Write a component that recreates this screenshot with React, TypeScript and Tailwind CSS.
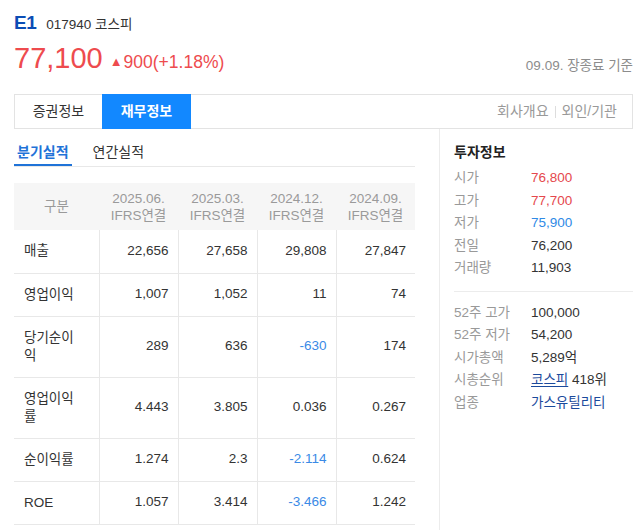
import React from "react";

const FONT = '"Liberation Sans", "Noto Sans CJK KR", sans-serif';

type Cell = { v: string; neg?: boolean };
type Row = { label: string; cells: Cell[]; tall?: boolean };

const rows: Row[] = [
  { label: "매출", cells: [{ v: "22,656" }, { v: "27,658" }, { v: "29,808" }, { v: "27,847" }] },
  { label: "영업이익", cells: [{ v: "1,007" }, { v: "1,052" }, { v: "11" }, { v: "74" }] },
  { label: "당기순이익", tall: true, cells: [{ v: "289" }, { v: "636" }, { v: "-630", neg: true }, { v: "174" }] },
  { label: "영업이익률", tall: true, cells: [{ v: "4.443" }, { v: "3.805" }, { v: "0.036" }, { v: "0.267" }] },
  { label: "순이익률", cells: [{ v: "1.274" }, { v: "2.3" }, { v: "-2.114", neg: true }, { v: "0.624" }] },
  { label: "ROE", cells: [{ v: "1.057" }, { v: "3.414" }, { v: "-3.466", neg: true }, { v: "1.242" }] },
];

const heads = ["2025.06.", "2025.03.", "2024.12.", "2024.09."];

function InfoRow({ label, children }: { label: string; children: React.ReactNode }) {
  return (
    <div className="flex h-[22.5px] items-center text-[13.5px]">
      <span className="w-[77px] text-[#999]">{label}</span>
      <span>{children}</span>
    </div>
  );
}

export default function App() {
  return (
    <div className="w-[642px] h-[530px] bg-white overflow-hidden text-[#333]" style={{ fontFamily: FONT }}>
      {/* header */}
      <div className="pl-[14px] pr-[9px] pt-[9px]">
        <div className="flex items-baseline h-[24px]">
          <span className="text-[19px] font-bold text-[#0b4db5] tracking-[-0.5px]">E1</span>
          <span className="ml-[10px] text-[13.5px] text-[#333]">017940 코스피</span>
        </div>
        <div className="flex items-end justify-between h-[44px]">
          <div className="flex items-baseline pb-[2px]">
            <span className="text-[29px] leading-[34px] text-[#ee4b4e]">77,100</span>
            <span className="ml-[7px] text-[17.5px] text-[#ee4b4e]">
              <span className="text-[13px] relative top-[-2px] mr-[1px]">▲</span>900(+1.18%)
            </span>
          </div>
          <span className="text-[13.5px] text-[#8c8c8c] pb-[1px]">09.09. 장종료 기준</span>
        </div>
      </div>

      {/* tab bar */}
      <div className="ml-[14px] mr-[9px] mt-[17px] h-[35px] border border-[#e3e3e3] flex items-stretch justify-between">
        <div className="flex">
          <div className="w-[87px] flex items-center justify-center text-[14px] text-[#333]">증권정보</div>
          <div className="w-[89px] -my-px flex items-center justify-center text-[14px] font-bold text-white bg-[#1288ff]">재무정보</div>
        </div>
        <div className="flex items-center pr-[15px] text-[14px] text-[#999]">
          <span>회사개요</span>
          <span className="mx-[6px] h-[12px] w-px bg-[#ddd]" />
          <span>외인/기관</span>
        </div>
      </div>

      {/* body */}
      <div className="flex">
        <div className="ml-[14px] w-[401px]">
          <div className="pt-[13px] border-b border-[#e8e8e8] flex">
            <div className="leading-[20px] pb-[2px] px-[3px] border-b-2 border-[#1f73d8] text-[14px] font-bold text-[#1f73d8]">분기실적</div>
            <div className="ml-[21px] leading-[20px] pb-[2px] text-[14px] text-[#333]">연간실적</div>
          </div>

          <table className="mt-[16px] w-[401px] table-fixed border-collapse">
            <colgroup>
              <col className="w-[85px]" />
              <col className="w-[79px]" />
              <col className="w-[79px]" />
              <col className="w-[79px]" />
              <col className="w-[79px]" />
            </colgroup>
            <thead>
              <tr className="h-[47px] bg-[#f6f6f6] text-[13.5px] leading-[17px] text-[#9a9a9a]">
                <th className="font-normal text-center">구분</th>
                {heads.map((h) => (
                  <th key={h} className="font-normal text-center">
                    {h}
                    <br />
                    IFRS연결
                  </th>
                ))}
              </tr>
            </thead>
            <tbody>
              {rows.map((r) => (
                <tr key={r.label} className={`border-b border-[#e8e8e8] ${r.tall ? "h-[61px]" : "h-[43px]"}`}>
                  <td className="pl-[10px] pr-[16px] text-[13.5px] leading-[18px] text-[#333]">{r.label}</td>
                  {r.cells.map((c, i) => (
                    <td
                      key={i}
                      className={`border-l border-[#e8e8e8] pr-[9px] text-right text-[13.5px] ${c.neg ? "text-[#3a8ae6]" : "text-[#333]"}`}
                    >
                      {c.v}
                    </td>
                  ))}
                </tr>
              ))}
            </tbody>
          </table>
        </div>

        <div className="ml-[24px] border-l border-[#ececec] w-[194px] h-[401px]">
          <div className="pl-[14px]">
            <div className="pt-[13px] leading-[20px] text-[14px] font-bold text-[#222]">투자정보</div>
            <div className="mt-[5px] pb-[11px] border-b border-[#ececec]">
              <InfoRow label="시가"><span className="text-[#e5484d]">76,800</span></InfoRow>
              <InfoRow label="고가"><span className="text-[#e5484d]">77,700</span></InfoRow>
              <InfoRow label="저가"><span className="text-[#2f8ae6]">75,900</span></InfoRow>
              <InfoRow label="전일">76,200</InfoRow>
              <InfoRow label="거래량">11,903</InfoRow>
            </div>
            <div className="pt-[10px]">
              <InfoRow label="52주 고가">100,000</InfoRow>
              <InfoRow label="52주 저가">54,200</InfoRow>
              <InfoRow label="시가총액">5,289억</InfoRow>
              <InfoRow label="시총순위">
                <span className="text-[#1b4a9c] underline underline-offset-2">코스피</span> 418위
              </InfoRow>
              <InfoRow label="업종"><span className="text-[#1b4a9c]">가스유틸리티</span></InfoRow>
            </div>
          </div>
        </div>
      </div>
    </div>
  );
}
